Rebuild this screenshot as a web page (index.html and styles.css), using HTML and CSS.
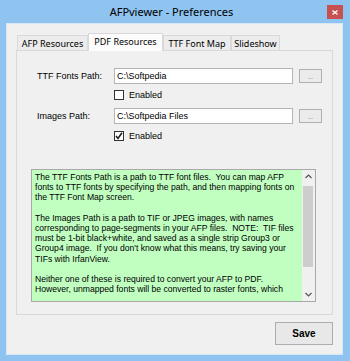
FILE: index.html
```html
<!DOCTYPE html>
<html>
<head>
<meta charset="utf-8">
<link rel="stylesheet" href="styles.css">
</head>
<body>
<div class="window">
  <div class="titlebar">
    <span class="spacer"></span>
    <span class="title">AFPviewer - Preferences</span>
    <span class="close"><svg width="6" height="5" viewBox="0 0 6 5"><path d="M0.5 0.5 L5.5 4.5 M5.5 0.5 L0.5 4.5" stroke="#fff" stroke-width="1.3" fill="none"/></svg></span>
  </div>
  <div class="client">
    <div class="tabs">
      <div class="tab tab-afp">AFP Resources</div>
      <div class="tab tab-pdf active">PDF Resources</div>
      <div class="tab tab-ttf">TTF Font Map</div>
      <div class="tab tab-slide">Slideshow</div>
    </div>
    <div class="panel">
      <div class="form">
        <div class="row">
          <span class="label">TTF Fonts Path:</span>
          <span class="input">C:\Softpedia</span>
          <span class="browse">...</span>
        </div>
        <div class="check first-check"><span class="box"></span><span>Enabled</span></div>
        <div class="row row2">
          <span class="label">Images Path:</span>
          <span class="input">C:\Softpedia Files</span>
          <span class="browse">...</span>
        </div>
        <div class="check second-check"><span class="box"><svg width="8" height="8" viewBox="0 0 8 8"><path d="M1 4 L3 6.5 L7 0.8" stroke="#222" stroke-width="1.6" fill="none"/></svg></span><span>Enabled</span></div>
      </div>
      <div class="memo">
        <div class="memo-text">The TTF Fonts Path is a path to TTF font files.  You can map AFP
fonts to TTF fonts by specifying the path, and then mapping fonts on
the TTF Font Map screen.

The Images Path is a path to TIF or JPEG images, with names
corresponding to page-segments in your AFP files.  NOTE:  TIF files
must be 1-bit black+white, and saved as a single strip Group3 or
Group4 image.  If you don't know what this means, try saving your
TIFs with IrfanView.

Neither one of these is required to convert your AFP to PDF.
However, unmapped fonts will be converted to raster fonts, which</div>
        <div class="scrollbar">
          <span class="arrow"><svg width="7" height="5" viewBox="0 0 7 5"><path d="M0.5 4 L3.5 1 L6.5 4" stroke="#555" stroke-width="1.2" fill="none"/></svg></span>
          <span class="track"><span class="thumb"></span></span>
          <span class="arrow"><svg width="7" height="5" viewBox="0 0 7 5"><path d="M0.5 1 L3.5 4 L6.5 1" stroke="#555" stroke-width="1.2" fill="none"/></svg></span>
        </div>
      </div>
    </div>
    <div class="footer"><span class="save">Save</span></div>
  </div>
</div>
</body>
</html>
```
FILE: styles.css
```css
* { box-sizing: border-box; }
html, body { margin: 0; padding: 0; }
body { width: 350px; height: 361px; overflow: hidden; background: #8fc3f0; }

.window {
  width: 350px;
  height: 361px;
  background: #8fc3f0;
  display: flex;
  flex-direction: column;
}

.titlebar {
  height: 23px;
  display: grid;
  grid-template-columns: 1fr auto 1fr;
  align-items: start;
  padding-right: 7px;
}
.title {
  font-family: "Noto Sans", sans-serif;
  font-size: 11px;
  line-height: 23px;
  color: #000;
  white-space: nowrap;
}
.close {
  justify-self: end;
  margin-top: 5px;
  width: 16px;
  height: 14px;
  background: #c75050;
  display: flex;
  align-items: center;
  justify-content: center;
}

.client {
  margin: 0 7px 0 6px;
  height: 332px;
  background: #f0f0f0;
  border: 1px solid #d7e7f6;
  display: flex;
  flex-direction: column;
}

.tabs {
  height: 27px;
  margin-bottom: -1px;
  padding-left: 10px;
  display: flex;
  align-items: flex-end;
  position: relative;
  z-index: 1;
}
.tab {
  font-family: "Noto Sans", sans-serif;
  font-size: 9px;
  color: #000;
  height: 15px;
  margin-bottom: 1px;
  border: 1px solid #d9d9d9;
  border-bottom: none;
  background: #ececec;
  display: flex;
  align-items: center;
  justify-content: center;
  white-space: nowrap;
}
.tab-afp { width: 71px; }
.tab-pdf { width: 75px; }
.tab-ttf { width: 68px; }
.tab-slide { width: 49px; }
.tab.active {
  height: 18px;
  margin-bottom: 0;
  background: #fcfcfc;
  padding-bottom: 2px;
}

.panel {
  margin-left: 9px;
  width: 317px;
  height: 265px;
  border: 1px solid #d9d9d9;
  background: #f0f0f0;
  padding: 17px 0 0 14px;
}

.form {
  padding-left: 6px;
  font-family: "Liberation Sans", Arial, sans-serif;
  font-size: 9px;
  color: #000;
}
.row {
  display: flex;
  align-items: center;
  height: 16px;
}
.row2 { margin-top: 8px; }
.label { width: 77px; }
.input {
  width: 179px;
  height: 16px;
  border: 1px solid #b5b5b5;
  background: #fff;
  padding-left: 2px;
  line-height: 14px;
}
.browse {
  margin-left: 6px;
  width: 23px;
  height: 14px;
  border: 1px solid #b0b0b0;
  background: #ebebeb;
  font-size: 6px;
  color: #444;
  display: flex;
  justify-content: center;
  align-items: flex-end;
  line-height: 9px;
}
.check {
  display: flex;
  align-items: center;
  height: 10px;
  padding-left: 77px;
  gap: 5px;
}
.first-check { margin-top: 6px; }
.second-check { margin-top: 7px; }
.box {
  width: 10px;
  height: 10px;
  border: 1px solid #333;
  background: #fff;
  display: flex;
  align-items: center;
  justify-content: center;
}

.memo {
  margin-top: 28px;
  width: 285px;
  height: 133px;
  border: 1px solid #a9a9a9;
  display: flex;
  background: #c0ffc0;
}
.memo-text {
  flex: 1;
  font-family: "Liberation Sans", Arial, sans-serif;
  font-size: 8.6px;
  line-height: 10.2px;
  color: #000;
  white-space: pre;
  overflow: hidden;
  padding: 2px 0 0 3px;
}
.scrollbar {
  width: 13px;
  background: #f0f0f0;
  display: flex;
  flex-direction: column;
  align-items: center;
}
.arrow {
  height: 13px;
  display: flex;
  align-items: center;
  justify-content: center;
}
.track {
  flex: 1;
  width: 100%;
  padding: 3px 1px 0 1px;
}
.thumb {
  display: block;
  width: 10px;
  height: 81px;
  background: #cdcdcd;
}

.footer {
  display: flex;
  justify-content: flex-end;
  padding-right: 9px;
  margin-top: 7px;
}
.save {
  width: 58px;
  height: 23px;
  border: 1px solid #adadad;
  background: #e8e8e8;
  font-family: "Liberation Sans", Arial, sans-serif;
  font-weight: bold;
  font-size: 10px;
  color: #000;
  display: flex;
  align-items: center;
  justify-content: center;
}
```
